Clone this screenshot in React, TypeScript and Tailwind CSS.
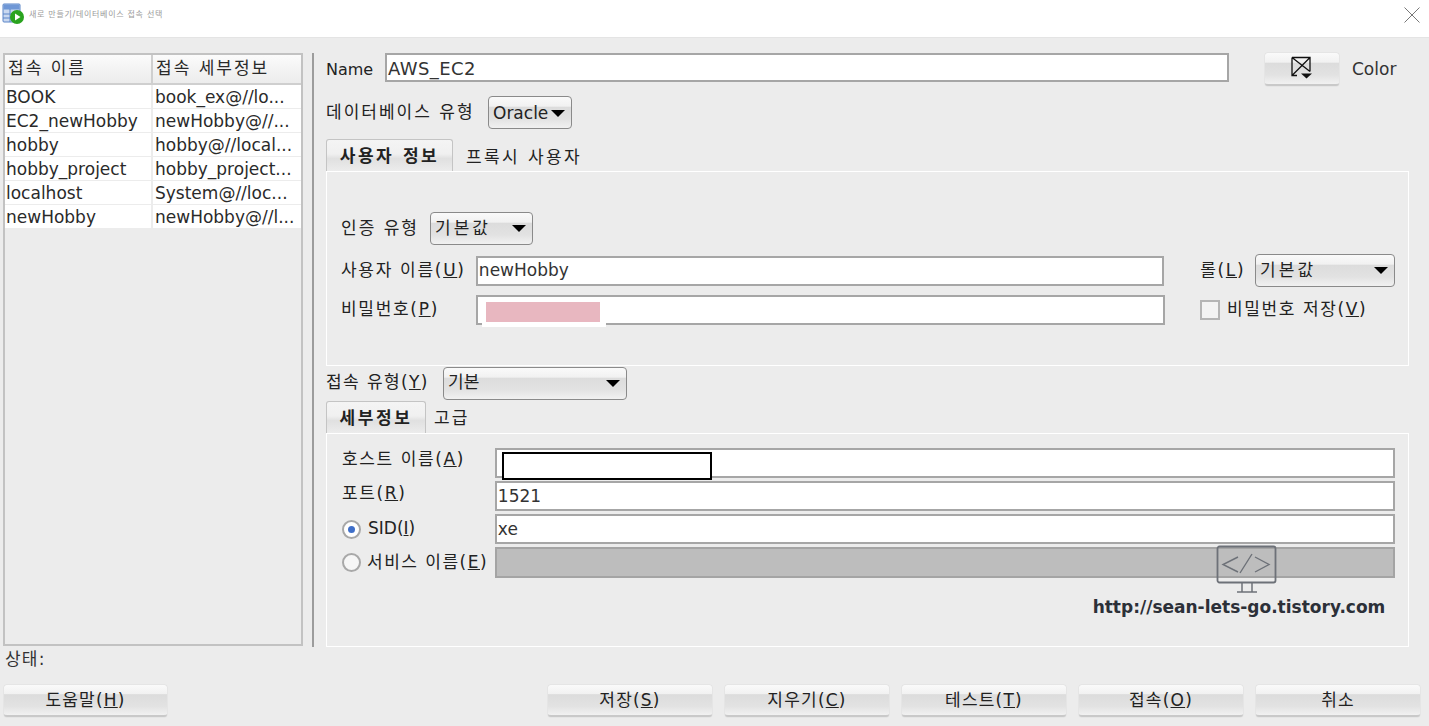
const fontStack = { fontFamily: '"DejaVu Sans", "Noto Sans CJK KR", sans-serif' }

const btnBg =
  'bg-[linear-gradient(to_bottom,#fafafa_0%,#f1f1f1_30%,#dcdcdc_32%,#e2e2e2_70%,#f1f1f1_100%)]'

function Caret() {
  return <span className="w-0 h-0 border-x-[7px] border-x-transparent border-t-[7px] border-t-black shrink-0" />
}

function Select({ label, className }: { label: string; className: string }) {
  return (
    <div className={`flex items-center justify-between pl-[4px] pr-[6px] rounded-[4px] border border-[#8a8a8a] ${btnBg} text-[17px] text-[#222] ${className}`}>
      <span>{label}</span>
      <Caret />
    </div>
  )
}

function Field({ value, className }: { value?: string; className: string }) {
  return (
    <div className={`flex items-center bg-white border-2 border-[#a6a6a6] pl-[1px] pt-[1px] text-[#333] ${className}`}>
      {value}
    </div>
  )
}

function Button({ children, className }: { children: React.ReactNode; className: string }) {
  return (
    <div className={`flex items-center justify-center h-[32px] pt-[1px] rounded-[3px] border-b-2 border-b-[#c9c9c9] shadow-[0_0_1px_#aaa] text-[17px] tracking-[1.2px] text-[#222] ${btnBg} ${className}`}>
      {children}
    </div>
  )
}

function Tab({ label, className }: { label: string; className: string }) {
  return (
    <div className={`flex items-center justify-center h-[32px] pt-[3px] rounded-t-[3px] border border-b-0 border-[#c4c4c4] font-bold text-[17px] tracking-[2.6px] text-[#222] bg-[linear-gradient(to_bottom,#f4f4f4_0%,#f0f0f0_45%,#e0e0e0_60%,#ececec_100%)] ${className}`}>
      {label}
    </div>
  )
}

const rows = [
  ['BOOK', 'book_ex@//lo...'],
  ['EC2_newHobby', 'newHobby@//...'],
  ['hobby', 'hobby@//local...'],
  ['hobby_project', 'hobby_project...'],
  ['localhost', 'System@//loc...'],
  ['newHobby', 'newHobby@//l...'],
]

function ConnectionTable() {
  return (
    <div className="w-[300px] h-[593px] mt-[15px] border-2 border-[#c2c2c2] text-[#2a2a2a] overflow-hidden">
      <div className="flex h-[30px] border-b-2 border-[#cfcfcf] text-[17px] tracking-[2px] bg-[linear-gradient(to_bottom,#fbfbfb,#ececec)]">
        <div className="w-[148px] flex items-center pl-[3px] border-r-2 border-[#cfcfcf]">접속 이름</div>
        <div className="flex-1 flex items-center pl-[3px]">접속 세부정보</div>
      </div>
      {rows.map(([name, detail]) => (
        <div key={name} className="flex h-[24px] bg-white border-b border-[#ececec] text-[17px] leading-[25px]">
          <div className="w-[148px] pl-[1px] border-r-2 border-[#ececec] whitespace-nowrap">{name}</div>
          <div className="flex-1 pl-[2px] whitespace-nowrap overflow-hidden">{detail}</div>
        </div>
      ))}
    </div>
  )
}

function TitleIcon() {
  return (
    <svg width="24" height="24" viewBox="0 0 24 24" className="ml-[1px]">
      <rect x="2" y="3" width="17" height="18" rx="1" fill="#c9d8ef" stroke="#5a85c8" />
      <rect x="2.5" y="3.5" width="16" height="5" fill="#6f97d6" />
      <path d="M2 13h17M2 17h17M9 8v13" stroke="#5a85c8" strokeWidth="1" />
      <circle cx="16" cy="16" r="7" fill="#2aa31f" />
      <path d="M14 12.5v7l5.5-3.5z" fill="#fff" />
    </svg>
  )
}

function ColorIcon() {
  return (
    <svg width="24" height="26" viewBox="0 0 24 26">
      <path d="M2 1.5h18v14M2 1.5v18h5M2 1.5l18 14M20 1.5L2 19.5" stroke="#111" strokeWidth="1.3" fill="none" />
      <path d="M11 17.5h11l-5.5 5z" fill="#111" />
    </svg>
  )
}

export default function App() {
  return (
    <div className="relative w-[1429px] h-[726px] overflow-hidden bg-[#ececec] flex flex-col" style={fontStack}>
      <div className="h-[38px] bg-white flex items-start pt-[1px] justify-between border-b border-[#e4e4e4]">
        <div className="flex items-center gap-[4px]">
          <TitleIcon />
          <span className="text-[8px] tracking-[0.7px] text-[#9a9a9a] mt-[3px]">새로 만들기/데이터베이스 접속 선택</span>
        </div>
        <svg width="16" height="16" viewBox="0 0 16 16" className="mt-[6px] mr-[9px]">
          <path d="M.5.5l15 15M15.5.5l-15 15" stroke="#777" strokeWidth="1" />
        </svg>
      </div>

      <div className="flex h-[609px]">
        <div className="pl-[3px]">
          <ConnectionTable />
        </div>
        <div className="w-[2px] h-[594px] mt-[15px] ml-[9px] bg-[#9c9c9c]" />
        <div className="ml-[12px] w-[1083px] text-[17px] text-[#222]">
          <div className="flex items-start pt-[15px] h-[58px]">
            <span className="w-[59px] mt-[5px] text-[16px]">Name</span>
            <div className="flex items-center w-[844px] h-[29px] bg-white border-2 border-[#a6a6a6] pl-[1px] pt-[1px] text-[18px] tracking-[0.4px] text-[#333]">AWS_EC2</div>
            <Button className="w-[74px] ml-[36px] h-[33px]">
              <ColorIcon />
            </Button>
            <span className="ml-[13px] mt-[4px] text-[#333]">Color</span>
          </div>
          <div className="flex items-center h-[33px]">
            <span className="w-[162px] tracking-[2px]">데이터베이스 유형</span>
            <Select label="Oracle" className="w-[84px] h-[33px] pt-[2px] text-[16px]" />
          </div>
          <div className="flex items-center mt-[10px]">
            <Tab label="사용자 정보" className="w-[127px]" />
            <span className="ml-[13px] mt-[5px] tracking-[2.4px]">프록시 사용자</span>
          </div>
          <div className="border border-white w-[1083px] h-[195px] pl-[14px] pr-[13px] pt-[40px]">
            <div className="flex items-center h-[33px]">
              <span className="w-[89px] tracking-[2px]">인증 유형</span>
              <Select label="기본값" className="w-[103px] h-[33px] tracking-[3px]" />
            </div>
            <div className="flex items-center mt-[9px] h-[33px]">
              <span className="w-[135px] tracking-[1.7px] whitespace-nowrap">사용자 이름(<u>U</u>)</span>
              <Field value="newHobby" className="w-[689px] h-[30px]" />
              <span className="ml-[36px] w-[55px] tracking-[1.7px]">롤(<u>L</u>)</span>
              <Select label="기본값" className="w-[140px] h-[33px] tracking-[3px]" />
            </div>
            <div className="flex items-center mt-[7px] h-[31px]">
              <span className="w-[135px] tracking-[1.7px]">비밀번호(<u>P</u>)</span>
              <div className="relative w-[689px] h-[30px] bg-white border-2 border-[#a6a6a6]">
                <div className="absolute left-[4px] top-[4px] w-[124px] h-[26px] bg-white">
                  <div className="ml-[4px] mt-[1px] w-[114px] h-[20px] bg-[#e8b7c0]" />
                </div>
              </div>
              <div className="ml-[35px] w-[20px] h-[20px] border-2 border-[#b5b5b5] bg-[#f3f3f3]" />
              <span className="ml-[7px] tracking-[1.6px] whitespace-nowrap">비밀번호 저장(<u>V</u>)</span>
            </div>
          </div>
          <div className="flex items-center h-[34px]">
            <span className="w-[117px] tracking-[1.4px] whitespace-nowrap">접속 유형(<u>Y</u>)</span>
            <Select label="기본" className="w-[184px] h-[33px]" />
          </div>
          <div className="flex items-center mt-[1px]">
            <Tab label="세부정보" className="w-[100px]" />
            <span className="ml-[8px] mt-[3px] tracking-[2px]">고급</span>
          </div>
          <div className="border border-white w-[1083px] h-[214px] pl-[15px] pr-[13px] pt-[13px]">
            <div className="flex items-center h-[31px]">
              <span className="w-[153px] -mt-[5px] tracking-[1.6px] whitespace-nowrap">호스트 이름(<u>A</u>)</span>
              <div className="relative w-[901px] h-[30px] bg-white border-2 border-[#a6a6a6]">
                <div className="absolute left-[5px] top-[2px] w-[210px] h-[28px] bg-white border-2 border-black" />
              </div>
            </div>
            <div className="flex items-center h-[30px] mt-[3px]">
              <span className="w-[153px] -mt-[4px] tracking-[1.6px]">포트(<u>R</u>)</span>
              <Field value="1521" className="w-[901px] h-[30px]" />
            </div>
            <div className="flex items-center h-[30px] mt-[3px]">
              <span className="w-[153px] flex items-center">
                <span className="w-[19px] h-[19px] rounded-full border-2 border-[#a8a8a8] bg-white flex items-center justify-center mr-[7px]">
                  <span className="w-[7px] h-[7px] rounded-full bg-[#3f6fc9]" />
                </span>
                SID(<u>I</u>)
              </span>
              <Field value="xe" className="w-[901px] h-[30px]" />
            </div>
            <div className="flex items-center h-[31px] mt-[3px]">
              <span className="w-[153px] flex items-center whitespace-nowrap tracking-[1.5px]">
                <span className="w-[19px] h-[19px] rounded-full border-2 border-[#a8a8a8] bg-[#f6f6f6] mr-[6px]" />
                서비스 이름(<u>E</u>)
              </span>
              <div className="w-[901px] h-[31px] bg-[#bdbdbd] border-2 border-[#a4a4a4]" />
            </div>
          </div>
        </div>
      </div>

      <div className="h-[38px] pl-[5px] text-[17px] tracking-[1.2px] text-[#333]">상태:</div>

      <div className="flex items-start pl-[4px]">
        <Button className="w-[163px]">도움말(<u>H</u>)</Button>
        <div className="flex gap-[13px] ml-[381px]">
          <Button className="w-[164px]">저장(<u>S</u>)</Button>
          <Button className="w-[164px]">지우기(<u>C</u>)</Button>
          <Button className="w-[164px]">테스트(<u>T</u>)</Button>
          <Button className="w-[164px]">접속(<u>O</u>)</Button>
          <Button className="w-[164px]">취소</Button>
        </div>
      </div>

      {/* watermark */}
      <div className="absolute left-[1092px] top-[545px] w-[294px] flex flex-col items-center">
        <svg width="62" height="48" viewBox="0 0 62 48" className="ml-[15px]">
          <rect x="1.5" y="1.5" width="58" height="36" rx="2" fill="none" stroke="#6d7178" strokeWidth="1.8" />
          <path d="M22 12L7 19.5 22 27M39 12l14 7.5L39 27M36 9l-12 19" fill="none" stroke="#6d7178" strokeWidth="1.4" />
          <path d="M26 38v9M36 38v9M21 47h20" stroke="#6d7178" strokeWidth="1.5" fill="none" />
        </svg>
        <span className="text-[17px] font-bold text-[#2c3038] leading-[22px] mt-[3px] whitespace-nowrap">
          http://sean-lets-go.tistory.com
        </span>
      </div>
    </div>
  )
}
